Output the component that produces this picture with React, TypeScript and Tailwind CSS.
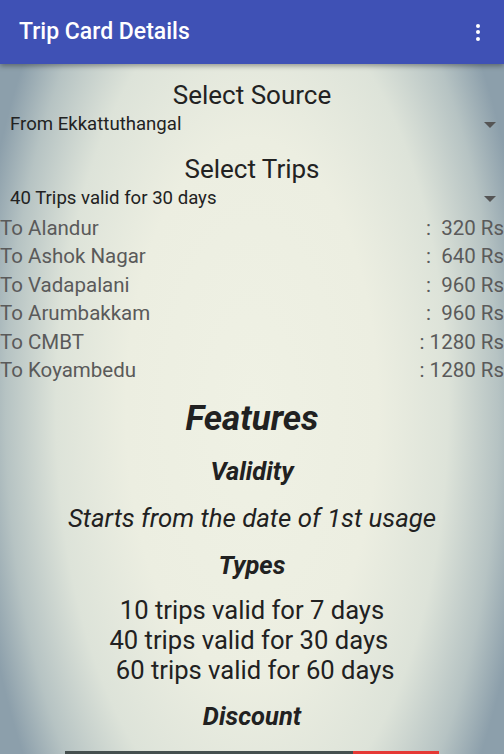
import React from 'react';

const fares = [
  { to: 'To Alandur', price: ':  320 Rs' },
  { to: 'To Ashok Nagar', price: ':  640 Rs' },
  { to: 'To Vadapalani', price: ':  960 Rs' },
  { to: 'To Arumbakkam', price: ':  960 Rs' },
  { to: 'To CMBT', price: ': 1280 Rs' },
  { to: 'To Koyambedu', price: ': 1280 Rs' },
];

const Spinner: React.FC<{ label: string }> = ({ label }) => (
  <div className="flex h-[28px] items-center justify-between pl-[10px] pr-[8px]">
    <span className="text-[18.6px] text-[#222]">{label}</span>
    <span className="h-0 w-0 border-x-[6px] border-t-[6px] border-x-transparent border-t-[#555]" />
  </div>
);

const App: React.FC = () => {
  return (
    <div className="flex h-[754px] w-full flex-col overflow-hidden font-['Roboto',sans-serif]">
      <header className="relative z-10 flex h-16 shrink-0 items-center justify-between bg-[#3f51b5] pl-[19px] pr-[24px] shadow-[0_2px_5px_rgba(0,0,0,0.35)]">
        <h1 className="text-[23px] font-medium text-white">Trip Card Details</h1>
        <div className="flex flex-col gap-[2.5px]">
          <span className="h-[4px] w-[4px] rounded-full bg-white" />
          <span className="h-[4px] w-[4px] rounded-full bg-white" />
          <span className="h-[4px] w-[4px] rounded-full bg-white" />
        </div>
      </header>

      <main className="flex flex-1 flex-col bg-[radial-gradient(ellipse_280px_600px_at_50%_50%,#eff1e4_0%,#eceee1_45%,#dde3d9_70%,#b6c3c3_88%,#8c9fab_100%)] pt-[15px]">
        <h2 className="text-center text-[26px] leading-[32px] text-[#222]">Select Source</h2>
        <Spinner label="From Ekkattuthangal" />

        <h2 className="mt-[14px] text-center text-[26px] leading-[32px] text-[#222]">Select Trips</h2>
        <Spinner label="40 Trips valid for 30 days" />

        <ul className="mt-px text-[20.5px] leading-[28.4px] text-[#5a5a5a]">
          {fares.map((f) => (
            <li key={f.to} className="flex justify-between">
              <span>{f.to}</span>
              <span className="whitespace-pre">{f.price}</span>
            </li>
          ))}
        </ul>

        <div className="flex flex-col items-center text-[#212121]">
          <h3 className="mt-[15px] text-[35px] font-bold italic leading-[40px]">Features</h3>
          <h4 className="mt-[16px] text-[25.5px] font-bold italic leading-[32px]">Validity</h4>
          <p className="mt-[15px] text-[25.8px] italic leading-[32px]">Starts from the date of 1st usage</p>
          <h4 className="mt-[15px] text-[25.5px] font-bold italic leading-[32px]">Types</h4>
          <div className="mt-[14px] whitespace-pre text-center text-[25.6px] leading-[30px]">
            <p>10 trips valid for 7 days</p>
            <p>{'40 trips valid for 30 days '}</p>
            <p>{' 60 trips valid for 60 days'}</p>
          </div>
          <h4 className="mt-[15px] text-[25.5px] font-bold italic leading-[32px]">Discount</h4>
        </div>

        <div className="mx-auto mt-[19px] flex h-[3px] w-[374px] shrink-0">
          <div className="w-[288px] bg-[#45504f]" />
          <div className="flex-1 bg-[#e53935]" />
        </div>
      </main>
    </div>
  );
};

export default App;
